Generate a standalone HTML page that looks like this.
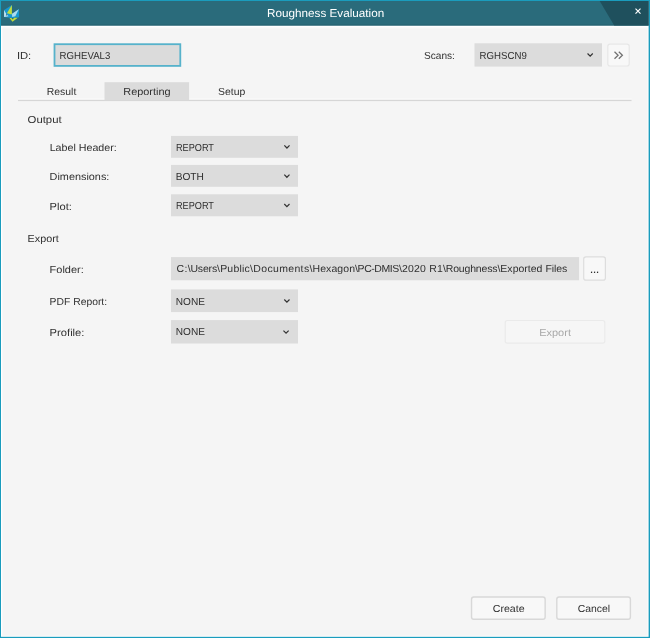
<!DOCTYPE html>
<html><head><meta charset="utf-8"><title>Roughness Evaluation</title>
<style>
html,body{margin:0;padding:0;}
body{width:650px;height:638px;overflow:hidden;background:#f5f5f5;font-family:"Liberation Sans",sans-serif;font-size:10.2px;color:#303030;text-rendering:geometricPrecision;position:relative;}
#bg{position:absolute;left:0;top:0;}
#txt{position:absolute;left:0;top:0;width:650px;height:638px;will-change:transform;}
.t{position:absolute;white-space:nowrap;line-height:14px;height:14px;transform-origin:0 50%;}
#title{left:266.80px;top:6.9px;color:#fff;font-size:11.5px;transform:scaleX(1.0186);-webkit-text-stroke:0;}
</style></head><body>
<svg id="bg" width="650" height="638" viewBox="0 0 650 638">
<!-- window frame -->
<rect x="0" y="0" width="650" height="638" fill="#1a9cbd"/>
<rect x="1" y="1" width="647.6" height="635.8" fill="#ffffff"/>
<rect x="2.3" y="27.6" width="645.3" height="608.2" fill="#f5f5f5"/>
<rect x="2.3" y="27.6" width="645.3" height="1" fill="#f9f9f9"/>
<!-- title bar -->
<rect x="1" y="1" width="647.6" height="24.5" fill="#2a6b7b"/>
<rect x="1" y="24.6" width="647.6" height="0.9" fill="#235f6e"/>
<polygon points="599.7,1 648.6,1 648.6,25.5 614.2,25.5" fill="#1f505d"/>
<!-- logo -->
<g>
<polygon points="4.1,9.9 11.9,5 11.9,14 19,9.1 19.1,17.2 12.5,17.9 9.5,17.8 4.1,16.9" fill="#1797cf"/>
<polygon points="11.85,5.1 6.9,13.3 11.9,14.6" fill="#c3dc3b"/>
<polygon points="4.1,10 6.4,14.2 8.6,16.3 4.1,16.9" fill="#c5e6f2"/>
<polygon points="6.1,13.9 7.4,15.2 5.8,15.6" fill="#1d5168"/>
<polygon points="18.8,9.2 12,13.8 12.2,17 15.3,16.2" fill="#aadcef"/>
<polygon points="9.5,17.9 11.4,17.9 12.6,19.5 14.2,17.8 17.8,17.7 12.5,21.8" fill="#c3dc3b"/>
</g>
<!-- close -->
<path d="M635.5,8.6 L640.5,13.6 M640.5,8.6 L635.5,13.6" stroke="#fff" stroke-width="1.15" fill="none"/>
<!-- ID input -->
<rect x="54.5" y="44.2" width="125.8" height="21.7" fill="#dbdbdb" stroke="#56b2cb" stroke-width="1.8"/>
<!-- Scans select -->
<rect x="474.5" y="43.3" width="127.5" height="23.3" fill="#dcdcdc"/>
<!-- >> button -->
<rect x="607.8" y="44.05" width="21.4" height="21.95" rx="2.2" fill="#f8f8f8" stroke="#e7e7e7" stroke-width="1.2"/>
<path d="M614.5,51.7 L618.1,55.2 L614.5,58.7 M618.8,51.7 L622.4,55.2 L618.8,58.7" stroke="#707070" stroke-width="1.25" fill="none"/>
<!-- tabs -->
<rect x="18" y="98.6" width="613.5" height="1.2" fill="#fcfcfc"/>
<rect x="18" y="99.8" width="613.5" height="1.3" fill="#d6d6d6"/>
<rect x="104.5" y="82.2" width="84.6" height="18.1" fill="#dbdbdb"/>
<!-- selects -->
<g fill="#dcdcdc">
<rect x="171" y="135.9" width="127" height="21.9"/>
<rect x="171" y="164.9" width="127" height="21.9"/>
<rect x="171" y="194.3" width="127" height="22"/>
<rect x="171" y="257.1" width="408.1" height="23.2"/>
<rect x="171" y="289.4" width="127" height="22.7"/>
<rect x="171" y="320.1" width="127" height="23.4"/>
</g>
<g stroke="#333" stroke-width="1.2" fill="none">
<path d="M587.55,53.48 L590.15,56.08 L592.75,53.48"/>
<path d="M284.35,145.43 L286.95,148.03 L289.55,145.43"/>
<path d="M284.30,174.68 L286.90,177.28 L289.50,174.68"/>
<path d="M284.30,204.03 L286.90,206.63 L289.50,204.03"/>
<path d="M284.30,299.53 L286.90,302.13 L289.50,299.53"/>
<path d="M283.45,330.58 L286.05,333.18 L288.65,330.58"/>
</g>
<!-- ... button -->
<rect x="583.7" y="256.9" width="21.7" height="23.3" rx="2.2" fill="#f8f8f8" stroke="#dddddd" stroke-width="1.2"/>
<!-- Export button -->
<rect x="505.2" y="320.5" width="99.6" height="22.7" rx="2.2" fill="#f6f6f6" stroke="#eaeaea" stroke-width="1.2"/>
<!-- Create / Cancel -->
<rect x="471.55" y="596.95" width="73.6" height="22.3" rx="2.2" fill="#f8f8f8" stroke="#d8d8d8" stroke-width="1.4"/>
<rect x="556.8" y="596.95" width="73.6" height="22.3" rx="2.2" fill="#f8f8f8" stroke="#d8d8d8" stroke-width="1.4"/>
</svg>
<div id="txt">
<div id="title" class="t">Roughness Evaluation</div>
<div class="t" id="l_id" style="left:16px;top:50px;transform:translateX(0.91px) scaleX(1.1003)">ID:</div>
<div class="t" id="v_id" style="left:59px;top:50px;transform:translateX(0.62px) scaleX(0.9464)">RGHEVAL3</div>
<div class="t" id="l_scans" style="left:424px;top:50px;transform:translateX(0.05px) scaleX(0.9913)">Scans:</div>
<div class="t" id="v_scans" style="left:479px;top:50px;transform:translateX(0.62px) scaleX(0.9463)">RGHSCN9</div>
<div class="t" id="t_result" style="left:46px;top:86px;transform:translateX(0.78px) scaleX(1.0217)">Result</div>
<div class="t" id="t_reporting" style="left:123px;top:86px;transform:translateX(0.30px) scaleX(1.0704)">Reporting</div>
<div class="t" id="t_setup" style="left:218px;top:86px;transform:translateX(0.04px) scaleX(1.0232)">Setup</div>
<div class="t" id="l_output" style="left:27px;top:114px;transform:translateX(0.57px) scaleX(1.1147)">Output</div>
<div class="t" id="l_lh" style="left:49px;top:142px;transform:translateX(0.63px) scaleX(1.0482)">Label Header:</div>
<div class="t" id="v_lh" style="left:175px;top:142px;transform:translateX(0.94px) scaleX(0.8997)">REPORT</div>
<div class="t" id="l_dim" style="left:49px;top:171px;transform:translateX(0.62px) scaleX(1.0655)">Dimensions:</div>
<div class="t" id="v_dim" style="left:175px;top:171px;transform:translateX(0.66px) scaleX(0.9989)">BOTH</div>
<div class="t" id="l_plot" style="left:49px;top:201px;transform:translateX(0.62px) scaleX(1.0934)">Plot:</div>
<div class="t" id="v_plot" style="left:175px;top:200px;transform:translateX(0.94px) scaleX(0.8997)">REPORT</div>
<div class="t" id="l_export" style="left:27px;top:233px;transform:translateX(0.61px) scaleX(1.0591)">Export</div>
<div class="t" id="l_folder" style="left:49px;top:264px;transform:translateX(0.62px) scaleX(1.0764)">Folder:</div>
<div class="t" id="v_folder" style="left:176px;top:263px;transform:translateX(0.55px) scaleX(1.0297)"><span style="letter-spacing:0.3px">C:</span><span style="letter-spacing:-0.157px">\Users</span><span style="letter-spacing:0.212px">\Public</span><span style="letter-spacing:0.337px">\Documents</span><span style="letter-spacing:0.081px">\Hexagon</span><span style="letter-spacing:-0.406px">\PC-DMIS</span><span style="letter-spacing:0.172px">\2020 R1</span><span style="letter-spacing:-0.145px">\Roughness</span><span style="letter-spacing:0.013px">\Exported </span><span style="letter-spacing:-0.054px">Files</span></div>
<div class="t" id="v_dots" style="left:589px;top:262px;font-size:13px;letter-spacing:-0.6px;transform:translateX(0.8px) scaleX(1)">...</div>
<div class="t" id="l_pdf" style="left:49px;top:296px;transform:translateX(0.62px) scaleX(1.0151)">PDF Report:</div>
<div class="t" id="v_pdf" style="left:175px;top:296px;transform:translateX(0.77px) scaleX(0.9908)">NONE</div>
<div class="t" id="l_prof" style="left:49px;top:327px;transform:translateX(0.62px) scaleX(1.0979)">Profile:</div>
<div class="t" id="v_prof" style="left:175px;top:326px;transform:translateX(0.77px) scaleX(0.9908)">NONE</div>
<div class="t" id="v_export" style="left:539px;top:327px;color:#a8a8a8;transform:translateX(0.19px) scaleX(1.0783)">Export</div>
<div class="t" id="v_create" style="left:492px;top:603px;transform:translateX(0.73px) scaleX(1.0420)">Create</div>
<div class="t" id="v_cancel" style="left:577px;top:603px;transform:translateX(0.73px) scaleX(1.0193)">Cancel</div>
</div>
</body></html>
